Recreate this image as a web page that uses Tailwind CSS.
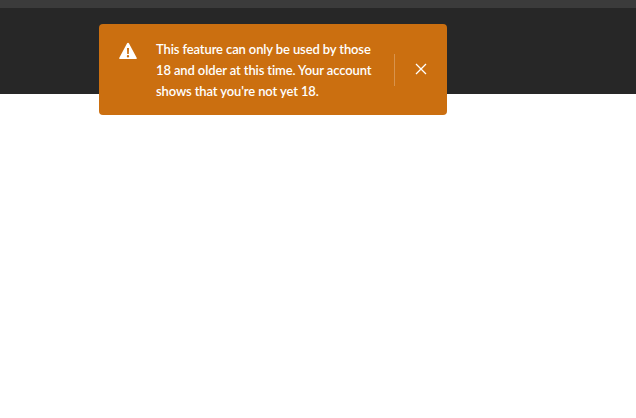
<!DOCTYPE html>
<html lang="en">
<head>
  <meta charset="UTF-8" />
  <title>Notice</title>
  <script src="https://cdn.jsdelivr.net/npm/@tailwindcss/browser@4"></script>
</head>
<body class="relative h-[418px] overflow-hidden bg-white font-['Lato',sans-serif]">
  <header class="h-[94px] bg-[#272727]">
    <div class="h-2 bg-[#3b3b3b]"></div>
  </header>

  <div role="alert" class="absolute left-[99px] top-6 flex h-[91px] w-[348px] items-center rounded-[4px] bg-[#cb6f10] text-white">
    <svg class="mb-[37px] ml-5 h-[18px] w-[18px] shrink-0" viewBox="0 0 18 18" fill="#fff">
      <path fill-rule="evenodd" d="M9 .8c.4 0 .7.2.9.5l7.900 14.600c.3.6-.1 1.200-.8 1.200H1c-.7 0-1.100-.6-.8-1.200L8.100 1.300c.2-.3.5-.5.9-.5zM8 6l.2 6h1.600l.2-6zM9 13a1.200 1.200 0 1 0 0 2.400A1.200 1.200 0 0 0 9 13z" />
    </svg>
    <p class="ml-[19px] mt-[2px] w-[222px] shrink-0 text-[13px] leading-[21px] font-semibold tracking-[-0.12px]">This feature can only be used by those 18 and older at this time. Your account shows that you're not yet 18.</p>
    <div class="ml-[16px] h-8 w-px shrink-0 bg-white/25"></div>
    <button class="mb-[1px] ml-[20px] shrink-0" aria-label="Close">
      <svg class="block h-[12px] w-[12px]" viewBox="0 0 12 12" fill="none" stroke="#fff" stroke-width="1.300">
        <path d="M1 1l10 10M11 1L1 11" />
      </svg>
    </button>
  </div>
</body>
</html>
